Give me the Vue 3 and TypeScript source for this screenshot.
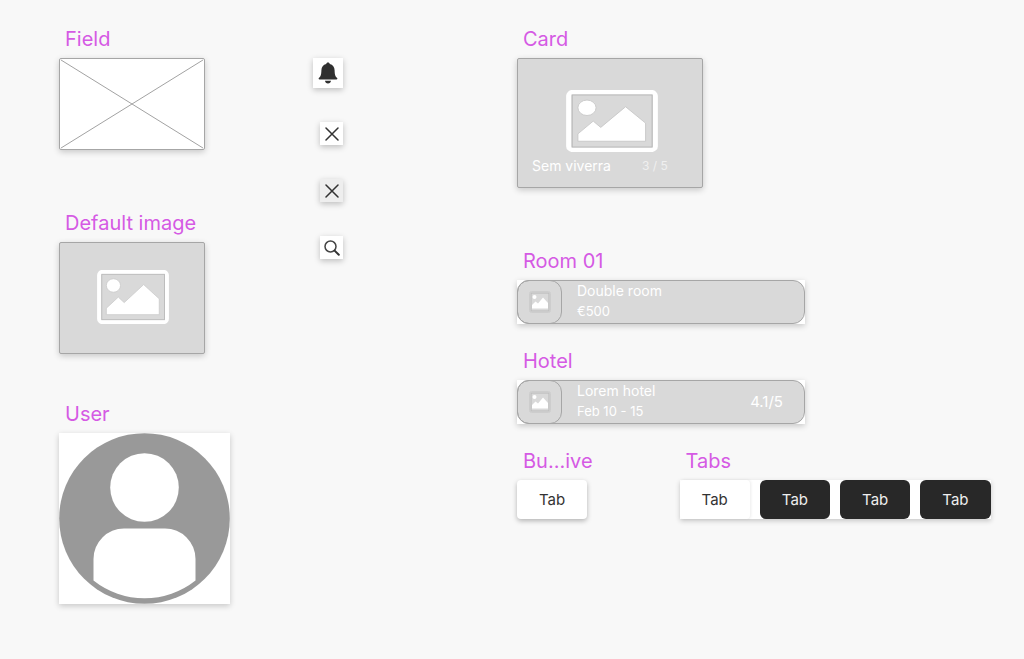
<script setup lang="ts">
interface Listing {
  label: string
  title: string
  detail: string
  rating?: string
}

const listings: Listing[] = [
  { label: 'Room 01', title: 'Double room', detail: '€500' },
  { label: 'Hotel', title: 'Lorem hotel', detail: 'Feb 10 - 15', rating: '4.1/5' },
]
const tabs: string[] = ['Tab', 'Tab', 'Tab', 'Tab']
</script>

<template>
  <main class="board">
    <div class="column">
      <section class="group">
        <h2 class="label">Field</h2>
        <svg class="field" viewBox="0 0 146 92" preserveAspectRatio="none" role="img" aria-label="Field">
          <path d="M1 1 145 91M145 1 1 91" fill="none" stroke="#a0a0a0" />
        </svg>
      </section>

      <section class="group spaced">
        <h2 class="label">Default image</h2>
        <div class="image">
          <svg class="picture" viewBox="0 0 71 53" preserveAspectRatio="none" aria-hidden="true">
            <rect x="2.2" y="2" width="66.6" height="49" rx="3" fill="none" stroke="#fff" stroke-width="4.2" />
            <rect x="4.7" y="4.2" width="61.8" height="44.6" fill="none" stroke="#b4b4b4" stroke-width=".8" />
            <ellipse cx="16.2" cy="15.2" rx="7" ry="6.6" fill="#fff" stroke="#c6c6c6" stroke-width=".7" />
            <path d="M9.2 43.8v-6.3L21 26.6l5.8 5.4L46 14.3l15.4 14v15.5z" fill="#fff" stroke="#c6c6c6" stroke-width=".7" />
          </svg>
        </div>
      </section>

      <section class="group user">
        <h2 class="label">User</h2>
        <svg class="avatar" viewBox="0 0 171 171" role="img" aria-label="User">
          <circle cx="85.5" cy="85.5" r="85.3" fill="#999" />
          <circle cx="85.5" cy="54.5" r="34.3" fill="#fff" />
          <path d="M34.5 147.5V126A30.5 30.5 0 0 1 65 95.5h41a30.5 30.5 0 0 1 30.500 30.500v21.500a82 82 0 0 1-102 0z" fill="#fff" />
        </svg>
      </section>
    </div>

    <div class="icons">
      <button class="icon large" type="button" aria-label="Notifications">
        <svg width="20" height="22" viewBox="0 0 20 22">
          <path d="M10 .5c1 0 1.700.6 1.800 1.500 3 .8 4.700 3 4.800 6.300.1 4.500.8 6.300 2.300 7.400.9.700.5 1.700-.5 1.700H1.600c-1 0-1.400-1-.5-1.700 1.500-1.100 2.200-2.900 2.300-7.400C3.500 5 5.200 2.800 8.200 2 8.300 1.100 9 .5 10 .5zM7 18.800h6c-.1 1.600-1.300 2.700-3 2.700s-2.900-1.100-3-2.700z" fill="#303030" />
        </svg>
      </button>
      <button class="icon" type="button" aria-label="Close">
        <svg width="14" height="14" viewBox="0 0 14 14"><path d="m1 1 12 12M13 1 1 13" fill="none" stroke="#333" stroke-width="1.500" stroke-linecap="round" /></svg>
      </button>
      <button class="icon muted" type="button" aria-label="Close panel">
        <svg width="14" height="14" viewBox="0 0 14 14"><path d="m1 1 12 12M13 1 1 13" fill="none" stroke="#333" stroke-width="1.500" stroke-linecap="round" /></svg>
      </button>
      <button class="icon" type="button" aria-label="Search">
        <svg width="16" height="16" viewBox="0 0 16 16">
          <circle cx="6.500" cy="6.500" r="5.500" fill="none" stroke="#444" stroke-width="1.500" />
          <path d="m10.600 10.600 4.200 4.200" fill="none" stroke="#333" stroke-width="2" stroke-linecap="round" />
        </svg>
      </button>
    </div>

    <div class="column">
      <section class="group">
        <h2 class="label">Card</h2>
        <article class="card">
          <svg class="picture" viewBox="0 0 71 53" preserveAspectRatio="none" aria-hidden="true">
            <rect x="2.2" y="2" width="66.6" height="49" rx="3" fill="none" stroke="#fff" stroke-width="4.2" />
            <rect x="4.7" y="4.2" width="61.8" height="44.6" fill="none" stroke="#b4b4b4" stroke-width=".8" />
            <ellipse cx="16.2" cy="15.2" rx="7" ry="6.6" fill="#fff" stroke="#c6c6c6" stroke-width=".7" />
            <path d="M9.2 43.8v-6.3L21 26.6l5.8 5.4L46 14.3l15.4 14v15.5z" fill="#fff" stroke="#c6c6c6" stroke-width=".7" />
          </svg>
          <div class="caption">
            <span>Sem viverra</span>
            <span class="count">3 / 5</span>
          </div>
        </article>
      </section>

      <section
        v-for="(item, index) in listings"
        :key="item.label"
        class="group"
        :class="index === 0 ? 'spaced' : 'near'"
      >
        <h2 class="label">{{ item.label }}</h2>
        <div class="plate">
          <article class="listing">
            <div class="thumb">
              <svg width="22" height="22" viewBox="0 0 22 22" aria-hidden="true">
                <rect x=".5" y=".5" width="21" height="21" rx="2" fill="#dedede" stroke="#cdcdcd" />
                <rect x="2" y="2" width="18" height="18" fill="#d9d9d9" stroke="#b8b8b8" />
                <circle cx="5.5" cy="6" r="2" fill="#fff" />
                <path d="M3 17.5v-3.500l3.500-3.500 2.500 2 5-6 5 5.500v5.500z" fill="#fff" />
              </svg>
            </div>
            <div class="info">
              <strong class="title">{{ item.title }}</strong>
              <span class="detail">{{ item.detail }}</span>
            </div>
            <span v-if="item.rating" class="rating">{{ item.rating }}</span>
          </article>
        </div>
      </section>

      <div class="controls near">
        <section class="group">
          <h2 class="label">Bu...ive</h2>
          <button class="tab single" type="button">Tab</button>
        </section>
        <section class="group">
          <h2 class="label">Tabs</h2>
          <div class="tabs" role="tablist">
            <button
              v-for="(tab, index) in tabs"
              :key="index"
              class="tab"
              :class="{ dark: index > 0 }"
              type="button"
              role="tab"
              :aria-selected="index === 0"
            >{{ tab }}</button>
          </div>
        </section>
      </div>
    </div>
  </main>
</template>

<style>
body {
  margin: 0;
  background: #f8f8f8;
}
</style>

<style scoped>
.board {
  box-sizing: border-box;
  min-height: 100vh;
  display: grid;
  grid-template-columns: 254px 204px minmax(0, 1fr);
  align-items: start;
  padding: 27px 32px 55px 59px;
  font-family: Inter, "Liberation Sans", sans-serif;
  color: #fff;
}
.column {
  display: flex;
  flex-direction: column;
  align-items: flex-start;
}
.group {
  display: flex;
  flex-direction: column;
  align-items: flex-start;
  gap: 7px;
}
.spaced {
  margin-top: 61px;
}
.user {
  margin-top: 48px;
}
.near {
  margin-top: 25px;
}
.label {
  margin: 0;
  padding-left: 6px;
  color: #d55ae4;
  font-size: 20px;
  line-height: 24px;
  font-weight: 400;
}
.field,
.image,
.card {
  box-sizing: border-box;
  border: 1px solid #a6a6a6;
  border-radius: 2px;
  box-shadow: 0 2px 6px rgba(0, 0, 0, 0.2);
}
.field {
  display: block;
  width: 146px;
  height: 92px;
  background: #fff;
}
.image {
  display: flex;
  justify-content: center;
  box-sizing: border-box;
  width: 146px;
  height: 112px;
  padding: 27px 0 0 2px;
  background: #d9d9d9;
}
.image .picture {
  width: 72px;
  height: 54px;
}
.avatar {
  display: block;
  width: 171px;
  height: 171px;
  background: #fff;
  box-shadow: 0 2px 6px rgba(0, 0, 0, 0.2);
}
.icons {
  display: flex;
  flex-direction: column;
  align-items: flex-end;
  gap: 34px;
  width: 30px;
  padding-top: 31px;
}
.icon {
  display: flex;
  align-items: center;
  justify-content: center;
  width: 23px;
  height: 23px;
  padding: 0;
  border: 0;
  background: #fff;
  box-shadow: 0 2px 6px rgba(0, 0, 0, 0.24);
}
.icon.large {
  width: 30px;
  height: 30px;
}
.icon.muted {
  background: #eee;
}
.card {
  display: flex;
  flex-direction: column;
  align-items: center;
  width: 186px;
  padding: 31px 14px 11px;
  background: #d9d9d9;
}
.card .picture {
  width: 92px;
  height: 62px;
  margin-left: 4px;
}
.caption {
  display: flex;
  align-items: center;
  align-self: stretch;
  gap: 31px;
  padding-top: 4px;
  font-size: 14px;
  line-height: 20px;
}
.count {
  font-size: 12px;
  opacity: 0.6;
}
.plate {
  width: 288px;
  background: #fff;
  box-shadow: 0 2px 6px rgba(0, 0, 0, 0.2);
}
.listing {
  display: flex;
  align-items: center;
  box-sizing: border-box;
  height: 44px;
  padding-right: 21px;
  border: 1px solid #a6a6a6;
  border-radius: 12px;
  background: #d9d9d9;
}
.thumb {
  display: flex;
  align-items: center;
  justify-content: center;
  box-sizing: border-box;
  align-self: stretch;
  width: 45px;
  margin: -1px 0 -1px -1px;
  border: 1px solid #a6a6a6;
  border-radius: 12px;
}
.info {
  display: flex;
  flex-direction: column;
  flex: 1;
  padding: 0 0 2px 15px;
  line-height: 20px;
}
.title {
  font-size: 14px;
  font-weight: 400;
}
.detail {
  font-size: 13px;
}
.rating {
  padding-bottom: 2px;
  font-size: 15px;
}
.controls {
  display: flex;
  gap: 87px;
}
.tab {
  height: 39px;
  padding: 0;
  border: 0;
  border-radius: 4px;
  background: #fff;
  color: #333;
  font: inherit;
  font-size: 15px;
  box-shadow: 1px 0 3px rgba(0, 0, 0, 0.08);
}
.single {
  width: 70px;
  box-shadow: 0 2px 5px rgba(0, 0, 0, 0.28);
}
.tabs {
  display: grid;
  grid-template-columns: repeat(4, 1fr);
  gap: 10px;
  width: 311px;
  background: #fff;
  box-shadow: 0 2px 5px rgba(0, 0, 0, 0.2);
}
.tab.dark {
  border-radius: 6px;
  background: #282828;
  color: #eee;
  box-shadow: none;
}
</style>
